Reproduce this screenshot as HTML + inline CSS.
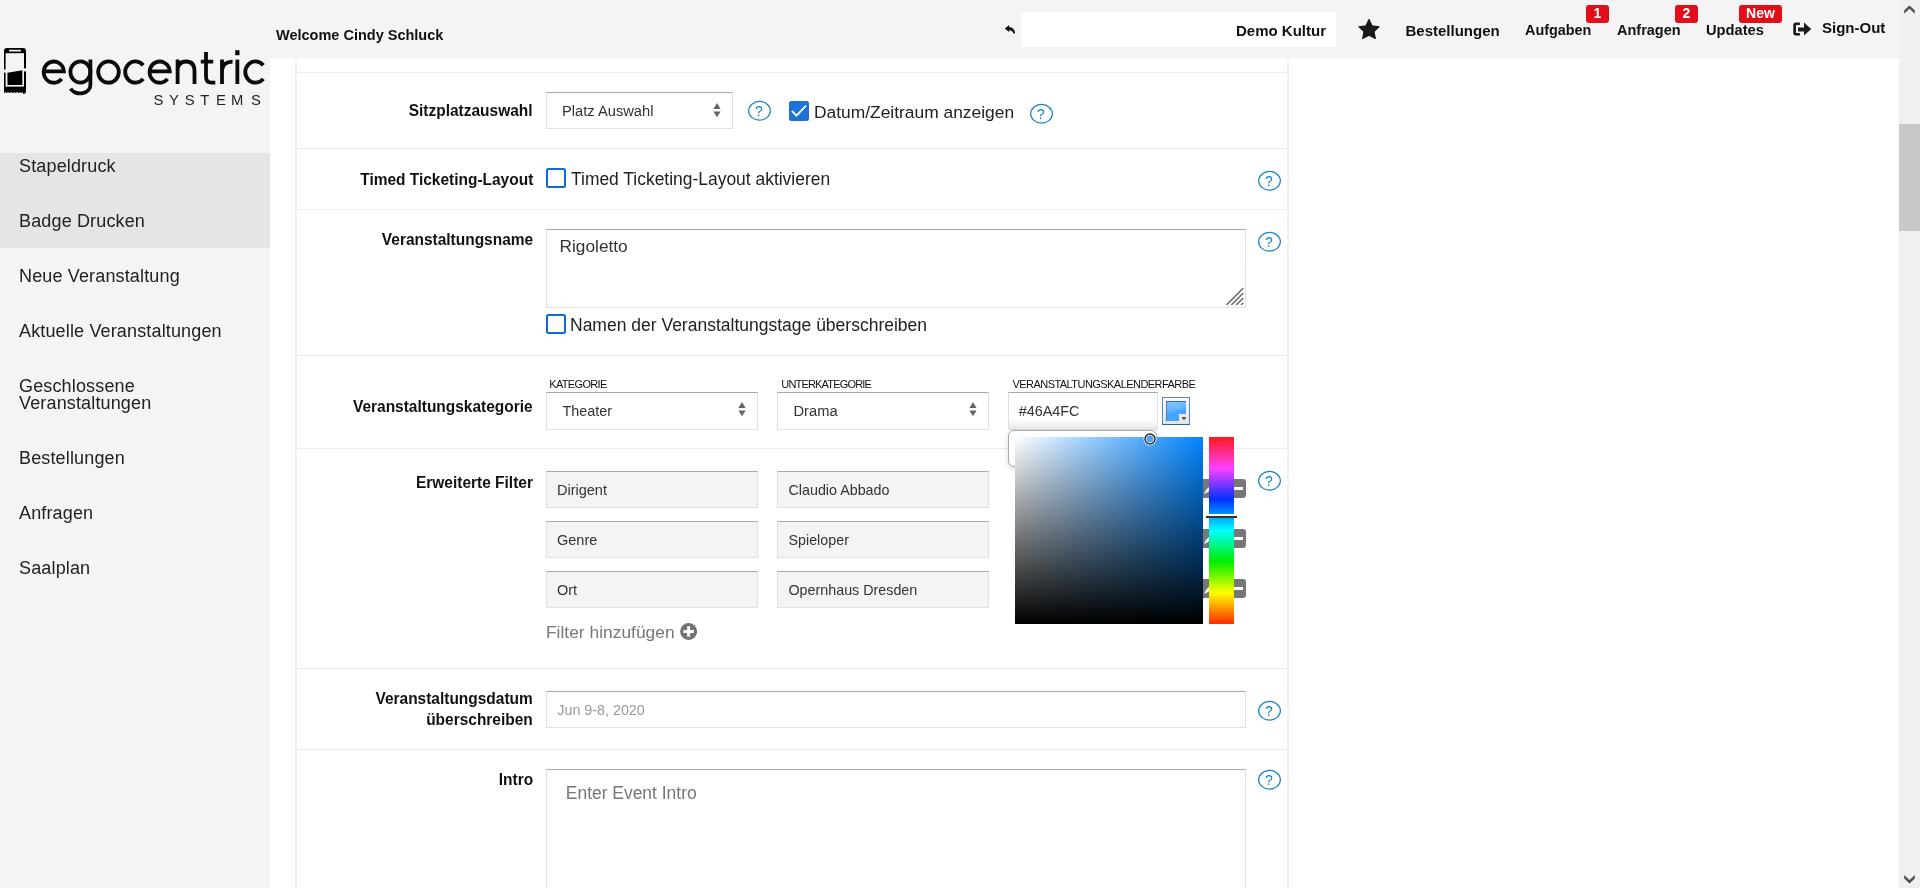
<!DOCTYPE html>
<html><head><meta charset="utf-8">
<style>
*{box-sizing:border-box;margin:0;padding:0}
html,body{width:1920px;height:888px;overflow:hidden;background:#f4f4f4;font-family:"Liberation Sans",sans-serif;color:#222}
.a{position:absolute}
#side{left:0;top:0;width:270px;height:888px;background:#f4f4f4}
.nav{position:absolute;left:19px;font-size:18px;color:#222;line-height:18px;white-space:nowrap;letter-spacing:0.15px}
#hl{left:0;top:153px;width:270px;height:95px;background:#e5e5e5}
#content{left:270px;top:58px;width:1629px;height:830px;background:#fff}
#panel{left:295px;top:58px;width:994px;height:830px;border-left:2px solid #f2f2f2;border-right:2px solid #f2f2f2}
.hr{position:absolute;left:297px;width:990px;height:1px;background:#ececec}
.lbl{position:absolute;right:1387px;font-size:17.2px;font-weight:700;color:#111;white-space:nowrap;text-align:right;line-height:21px;transform:scaleX(0.9);transform-origin:100% 50%}
.help{position:absolute}
.hdr{position:absolute;font-size:15px;font-weight:700;color:#111;white-space:nowrap;line-height:15px}
.badge{position:absolute;background:#e20f1b;color:#fff;font-weight:700;font-size:14px;border-radius:3px;text-align:center;line-height:16.6px;height:18px}
.box{position:absolute;border:1px solid #e0e0e0;border-top-color:#a9a9a9;background:#fff}
.txt{position:absolute;white-space:nowrap}
.cb{position:absolute;width:20px;height:20px;border:2px solid #0b6bd8;border-radius:2.5px;background:#fff}
.small{position:absolute;font-size:11px;color:#111;white-space:nowrap;line-height:11px}
</style></head>
<body>
<div id="wrap" class="a" style="left:0;top:0;width:1920px;height:888px;overflow:hidden;will-change:transform">
<div id="side" class="a"></div>
<div id="hl" class="a"></div>
<div id="content" class="a"></div>
<div id="panel" class="a"></div>
<!-- logo -->
<svg class="a" style="left:3px;top:47px" width="25" height="48" viewBox="0 0 25 48">
 <path d="M3.5 1.5h16a3 3 0 0 1 3 3v40.5h-22v-40.5a3 3 0 0 1 3-3z" fill="none" stroke="#000" stroke-width="0"/>
 <rect x="1" y="1" width="22" height="46" rx="3" fill="#000"/>
 <rect x="2.6" y="6.2" width="18.4" height="33.4" fill="#f4f4f4"/>
 <rect x="6" y="2.8" width="12" height="1.8" rx="0.9" fill="#f4f4f4"/>
 <path d="M4.4 25.8 L19.3 23.3 L19.4 38 L4.5 38 Z" fill="#000"/>
 <path d="M0 22.6 L3 22.4 L3 25.5 L0 25.7Z M21 21.4 L25 21 L25 24 L21 24.4Z" fill="#f4f4f4"/>
 <path d="M2 44.8 q1.5 2.6 3 0 q1.5 2.6 3 0 q1.5 2.6 3 0 q1.5 2.6 3 0 q1.5 2.6 3 0 q1.5 2.6 3 0 v3.5 h-18z" fill="#f4f4f4"/>
</svg>
<svg class="a" style="left:0;top:0" width="270" height="112" viewBox="0 0 270 112">
<g fill="none" stroke="#0a0a0a" stroke-width="3.8">
<path d="M43.8 71.3 H63.9 A10.1 10.6 0 1 0 61.6 78.9"/>
<path d="M80.4 61.4 A10 10.6 0 1 0 80.4 82.6 A10 10.6 0 1 0 80.4 61.4Z"/>
<path d="M90.4 59.6 V84.5 A10.4 8.4 0 0 1 70.6 88.6"/>
<path d="M108.5 61.4 A10.3 10.65 0 1 0 108.5 82.7 A10.3 10.65 0 1 0 108.5 61.4Z"/>
<path d="M143.2 65.2 A10.2 10.65 0 1 0 143.2 78.9"/>
<path d="M149.7 71.3 H169.8 A10.1 10.6 0 1 0 167.5 78.9"/>
<path d="M177.6 59.6 V84 M177.6 71 C177.6 64.5 181 61.5 186 61.5 C191.3 61.5 194.5 64.5 194.5 71 V84"/>
<path d="M206 51.9 V76.5 Q206 82.7 211.5 82.7 H215.3 M200.8 61.6 H213.2"/>
<path d="M222 59.6 V84 M222 70 Q223 61.6 232.6 61.6"/>
<path d="M237.35 59.6 V84"/>
<path d="M263.3 65.2 A10.2 10.65 0 1 0 263.3 78.9"/>
</g>
<rect x="235.2" y="50.2" width="4.3" height="5" fill="#0a0a0a"/>
<g font-family="Liberation Sans" font-size="14.8" fill="#222">
<text x="153.6" y="104.6">S</text><text x="168.9" y="104.6">Y</text><text x="184.7" y="104.6">S</text><text x="200.2" y="104.6">T</text><text x="215.9" y="104.6">E</text><text x="231.1" y="104.6">M</text><text x="250.9" y="104.6">S</text>
</g>
</svg>

<!-- sidebar nav -->
<div class="nav" style="top:156.5px">Stapeldruck</div>
<div class="nav" style="top:211.5px">Badge Drucken</div>
<div class="nav" style="top:267.2px">Neue Veranstaltung</div>
<div class="nav" style="top:322.2px">Aktuelle Veranstaltungen</div>
<div class="nav" style="top:378.2px;line-height:17px">Geschlossene<br>Veranstaltungen</div>
<div class="nav" style="top:448.5px">Bestellungen</div>
<div class="nav" style="top:503.5px">Anfragen</div>
<div class="nav" style="top:558.5px">Saalplan</div>

<!-- header -->
<div class="hdr" style="left:276px;top:27.7px;font-size:14.5px;line-height:14.5px;color:#111">Welcome Cindy Schluck</div>
<svg class="a" style="left:1003px;top:23px" width="14" height="13" viewBox="0 0 14 13"><path d="M1.8 5.5 L6.2 1.9 V3.9 C9.6 4.0 11.6 6.2 12.1 10 Q11.6 10.9 10.4 10.4 C9.8 8.6 8.6 7.4 6.2 7.3 V9.1 Z" fill="#111"/></svg>
<div class="a" style="left:1021px;top:12px;width:315px;height:35px;background:#fff"></div>
<div class="hdr" style="right:594px;top:23.3px">Demo Kultur</div>
<svg class="a" style="left:1358px;top:18.5px" width="22" height="21" viewBox="0 0 22 21"><path d="M11 0.6 L14.1 6.9 L21 7.8 L16 12.6 L17.3 19.5 L11 16.2 L4.7 19.5 L6 12.6 L1 7.8 L7.9 6.9Z" fill="#1a1a1a" stroke="#1a1a1a" stroke-width="1.2" stroke-linejoin="round"/></svg>
<div class="hdr" style="left:1405.5px;top:23px">Bestellungen</div>
<div class="hdr" style="left:1525px;top:23px;font-size:14.4px">Aufgaben</div>
<div class="badge" style="left:1586px;top:5px;width:23px">1</div>
<div class="hdr" style="left:1617px;top:23px;font-size:14.5px">Anfragen</div>
<div class="badge" style="left:1675px;top:5px;width:23px">2</div>
<div class="hdr" style="left:1706px;top:23px;font-size:14.7px">Updates</div>
<div class="badge" style="left:1739px;top:5px;width:43px">New</div>
<svg class="a" style="left:1793px;top:22px" width="19" height="15" viewBox="0 0 19 15"><path d="M6.9 0.4 H2.8 Q0.3 0.4 0.3 2.9 V11.1 Q0.3 13.6 2.8 13.6 H6.9 V11 H3 V3 H6.9Z" fill="#1a1a1a"/><path d="M5 5.4 H11 V0.4 L18.2 7 L11 13.6 V9.6 H5Z" fill="#1a1a1a"/></svg>
<div class="hdr" style="left:1822px;top:19.8px">Sign-Out</div>

<!-- scrollbar -->
<div class="a" style="left:1899px;top:0;width:21px;height:888px;background:#f1f1f1"></div>
<div class="a" style="left:1899px;top:124px;width:21px;height:107px;background:#c8c8c8"></div>
<svg class="a" style="left:1903px;top:4px" width="13" height="12" viewBox="0 0 13 12"><path d="M6.5 1.4 L11.8 6.3 V9.85 L6.5 4.8 L1.2 9.85 V6.3Z" fill="#505050"/></svg>
<svg class="a" style="left:1903px;top:873px" width="13" height="12" viewBox="0 0 13 12"><path d="M1.2 1.9 L6.5 6.95 L11.8 1.9 V5.45 L6.5 10.4 L1.2 5.45Z" fill="#505050"/></svg>
<!-- separators -->
<div class="hr" style="top:72px"></div>
<div class="hr" style="top:148px"></div>
<div class="hr" style="top:209px"></div>
<div class="hr" style="top:355px"></div>
<div class="hr" style="top:448px"></div>
<div class="hr" style="top:668px"></div>
<div class="hr" style="top:749px"></div>

<!-- labels -->
<div class="lbl" style="top:99.9px">Sitzplatzauswahl</div>
<div class="lbl" style="top:169.1px">Timed Ticketing-Layout</div>
<div class="lbl" style="top:228.8px">Veranstaltungsname</div>
<div class="lbl" style="top:395.9px">Veranstaltungskategorie</div>
<div class="lbl" style="top:472.1px">Erweiterte Filter</div>
<div class="lbl" style="top:687.8px">Veranstaltungsdatum<br>überschreiben</div>
<div class="lbl" style="top:768.8px">Intro</div>

<!-- row1 -->
<div class="box" style="left:546px;top:92px;width:187px;height:37px"></div>
<div class="txt" style="left:562px;top:104px;font-size:14.7px;line-height:14.7px;color:#333">Platz Auswahl</div>
<svg class="a" style="left:713px;top:102.9px" width="9" height="16" viewBox="0 0 9 16"><path d="M4 0 L7.6 5.9 H0.4Z M0.4 8.6 H7.6 L4 14.2Z" fill="#666"/></svg>
<svg class="help" style="left:747px;top:100px" width="25" height="22" viewBox="0 0 25 22"><ellipse cx="12.5" cy="10.8" rx="10.85" ry="9.35" fill="none" stroke="#1580cc" stroke-width="1.2"/><text x="12.0" y="15.8" text-anchor="middle" font-family="Liberation Sans" font-size="14" fill="#1580cc">?</text></svg>
<div class="cb" style="left:789px;top:101px;background:#1a74d9;border-color:#1a72d8"><svg width="16" height="16" viewBox="0 0 16 16" style="position:absolute;left:0;top:0"><path d="M0.9 7.9 L5.5 12.6 L15 2.6" fill="none" stroke="#fff" stroke-width="1.8"/></svg></div>
<div class="txt" style="left:814px;top:104.3px;font-size:17.4px;line-height:17.4px;color:#222">Datum/Zeitraum anzeigen</div>
<svg class="help" style="left:1029px;top:103px" width="25" height="22" viewBox="0 0 25 22"><ellipse cx="12.5" cy="10.8" rx="10.85" ry="9.35" fill="none" stroke="#1580cc" stroke-width="1.2"/><text x="12.0" y="15.8" text-anchor="middle" font-family="Liberation Sans" font-size="14" fill="#1580cc">?</text></svg>

<!-- row2 -->
<div class="cb" style="left:546px;top:168px"></div>
<div class="txt" style="left:571px;top:171.3px;font-size:17.45px;line-height:17.45px;color:#222">Timed Ticketing-Layout aktivieren</div>
<svg class="help" style="left:1257px;top:170px" width="25" height="22" viewBox="0 0 25 22"><ellipse cx="12.5" cy="10.8" rx="10.85" ry="9.35" fill="none" stroke="#1580cc" stroke-width="1.2"/><text x="12.0" y="15.8" text-anchor="middle" font-family="Liberation Sans" font-size="14" fill="#1580cc">?</text></svg>

<!-- row3 -->
<div class="box" style="left:546px;top:229px;width:700px;height:79px"></div>
<div class="txt" style="left:559.5px;top:238.4px;font-size:17.3px;line-height:17.3px;color:#333">Rigoletto</div>
<svg class="a" style="left:1226px;top:288px" width="18" height="18" viewBox="0 0 18 18"><path d="M0.9 16.5 L16.9 0.5 M5.8 16.5 L16.9 5.5 M10.7 16.5 L16.9 10.5 M15.5 16.5 L16.9 15.3" stroke="#6a6a6a" stroke-width="1.5" stroke-linecap="round"/></svg>
<svg class="help" style="left:1257px;top:231px" width="25" height="22" viewBox="0 0 25 22"><ellipse cx="12.5" cy="10.8" rx="10.85" ry="9.35" fill="none" stroke="#1580cc" stroke-width="1.2"/><text x="12.0" y="15.8" text-anchor="middle" font-family="Liberation Sans" font-size="14" fill="#1580cc">?</text></svg>
<div class="cb" style="left:546px;top:314px"></div>
<div class="txt" style="left:570px;top:316.8px;font-size:17.5px;line-height:17.5px;color:#222">Namen der Veranstaltungstage überschreiben</div>

<!-- row4 -->
<div class="small" style="left:549.3px;top:378.7px;letter-spacing:-0.67px">KATEGORIE</div>
<div class="small" style="left:781.3px;top:378.7px;letter-spacing:-0.82px">UNTERKATEGORIE</div>
<div class="small" style="left:1012.5px;top:379.2px;letter-spacing:-0.55px">VERANSTALTUNGSKALENDERFARBE</div>
<div class="box" style="left:546px;top:392px;width:212px;height:38px"></div>
<div class="txt" style="left:562.4px;top:404.3px;font-size:14.4px;line-height:14.4px;color:#333">Theater</div>
<svg class="a" style="left:737.5px;top:402.4px" width="9" height="16" viewBox="0 0 9 16"><path d="M4 0 L7.6 5.9 H0.4Z M0.4 8.6 H7.6 L4 14.2Z" fill="#666"/></svg>
<div class="box" style="left:777px;top:392px;width:212px;height:38px"></div>
<div class="txt" style="left:793.5px;top:404px;font-size:14.7px;line-height:14.7px;color:#333">Drama</div>
<svg class="a" style="left:969px;top:402.4px" width="9" height="16" viewBox="0 0 9 16"><path d="M4 0 L7.6 5.9 H0.4Z M0.4 8.6 H7.6 L4 14.2Z" fill="#666"/></svg>
<div class="box" style="left:1008px;top:392px;width:150px;height:38px;background:linear-gradient(to bottom,#fff 72%,#e9e9e9)"></div>
<div class="txt" style="left:1018.7px;top:403.5px;font-size:14.4px;line-height:14.4px;color:#333">#46A4FC</div>
<div class="a" style="left:1162px;top:397px;width:28px;height:28px;border:1px solid #4f86c8;border-bottom-color:#2d609f;background:linear-gradient(#fff,#e2e2e2)"></div><div class="a" style="left:1166px;top:401px;width:20px;height:20px;border-top:1px solid #2c6db3;border-left:1px solid #3a7cc0;background:linear-gradient(165deg,#86c6ff 0%,#6ab7ff 35%,#46a4fc 55%,#46a4fc 100%)"></div><div class="a" style="left:1179px;top:414px;width:8px;height:8px;background:#e9e9e9"></div><svg class="a" style="left:1181px;top:416px" width="6" height="5" viewBox="0 0 6 5"><path d="M0.6 1 H5.4 L3 4.4Z" fill="#555"/></svg>

<!-- row5 filters -->
<div class="box" style="left:546px;top:471px;width:212px;height:37px;background:#f4f4f4"></div>
<div class="box" style="left:777px;top:471px;width:212px;height:37px;background:#f4f4f4"></div>
<div class="box" style="left:546px;top:521px;width:212px;height:37px;background:#f4f4f4"></div>
<div class="box" style="left:777px;top:521px;width:212px;height:37px;background:#f4f4f4"></div>
<div class="box" style="left:546px;top:571px;width:212px;height:37px;background:#f4f4f4"></div>
<div class="box" style="left:777px;top:571px;width:212px;height:37px;background:#f4f4f4"></div>
<div class="txt" style="left:557px;top:482.7px;font-size:14.5px;line-height:14.5px;color:#333">Dirigent</div>
<div class="txt" style="left:788.5px;top:482.7px;font-size:14.3px;line-height:14.3px;color:#333">Claudio Abbado</div>
<div class="txt" style="left:557px;top:532.7px;font-size:14.5px;line-height:14.5px;color:#333">Genre</div>
<div class="txt" style="left:788.5px;top:532.7px;font-size:14.3px;line-height:14.3px;color:#333">Spieloper</div>
<div class="txt" style="left:557px;top:582.7px;font-size:14.5px;line-height:14.5px;color:#333">Ort</div>
<div class="txt" style="left:788.5px;top:582.7px;font-size:14.3px;line-height:14.3px;color:#333">Opernhaus Dresden</div>
<div class="txt" style="left:546px;top:623.7px;font-size:17.4px;line-height:17.4px;color:#777">Filter hinzufügen</div>
<svg class="a" style="left:680px;top:623px" width="17" height="17" viewBox="0 0 17 17"><circle cx="8.6" cy="8.55" r="8.45" fill="#737373"/><path d="M8.6 3.3 V13.8 M3.35 8.55 H13.85" stroke="#fff" stroke-width="2.9"/></svg>
<!-- hidden action buttons -->
<div class="a" style="left:1199px;top:479px;width:47px;height:19px;background:#777;border-radius:3px"></div><svg class="a" style="left:1199px;top:479px" width="47" height="19" viewBox="0 0 47 19"><path d="M5 15 L7 11 L14 4 L16 6 L9 13Z" fill="#fff"/><rect x="35" y="8" width="9" height="3" fill="#fff"/></svg>
<div class="a" style="left:1199px;top:529px;width:47px;height:19px;background:#777;border-radius:3px"></div><svg class="a" style="left:1199px;top:529px" width="47" height="19" viewBox="0 0 47 19"><path d="M5 15 L7 11 L14 4 L16 6 L9 13Z" fill="#fff"/><rect x="35" y="8" width="9" height="3" fill="#fff"/></svg>
<div class="a" style="left:1199px;top:579px;width:47px;height:19px;background:#777;border-radius:3px"></div><svg class="a" style="left:1199px;top:579px" width="47" height="19" viewBox="0 0 47 19"><path d="M5 15 L7 11 L14 4 L16 6 L9 13Z" fill="#fff"/><rect x="35" y="8" width="9" height="3" fill="#fff"/></svg>
<svg class="help" style="left:1257px;top:470px" width="25" height="22" viewBox="0 0 25 22"><ellipse cx="12.5" cy="10.8" rx="10.85" ry="9.35" fill="none" stroke="#1580cc" stroke-width="1.2"/><text x="12.0" y="15.8" text-anchor="middle" font-family="Liberation Sans" font-size="14" fill="#1580cc">?</text></svg>

<!-- row6 -->
<div class="box" style="left:546px;top:691px;width:700px;height:37px"></div>
<div class="txt" style="left:557.3px;top:703.2px;font-size:14.3px;line-height:14.3px;color:#999">Jun 9-8, 2020</div>
<svg class="help" style="left:1257px;top:700px" width="25" height="22" viewBox="0 0 25 22"><ellipse cx="12.5" cy="10.8" rx="10.85" ry="9.35" fill="none" stroke="#1580cc" stroke-width="1.2"/><text x="12.0" y="15.8" text-anchor="middle" font-family="Liberation Sans" font-size="14" fill="#1580cc">?</text></svg>

<!-- row7 -->
<div class="box" style="left:546px;top:769px;width:700px;height:140px"></div>
<div class="txt" style="left:565.8px;top:784.8px;font-size:17.45px;line-height:17.45px;color:#777">Enter Event Intro</div>
<svg class="help" style="left:1257px;top:769px" width="25" height="22" viewBox="0 0 25 22"><ellipse cx="12.5" cy="10.8" rx="10.85" ry="9.35" fill="none" stroke="#1580cc" stroke-width="1.2"/><text x="12.0" y="15.8" text-anchor="middle" font-family="Liberation Sans" font-size="14" fill="#1580cc">?</text></svg>

<!-- color picker -->
<div class="a" style="left:1008px;top:430px;width:149px;height:37px;border:1px solid #aaa;border-radius:6px;background:#fff;box-shadow:0 2px 6px rgba(0,0,0,.15)"></div>
<div class="a" style="left:1015px;top:437px;width:188px;height:187px;background:linear-gradient(to bottom,rgba(0,0,0,0),#000),linear-gradient(to right,#fff,#0084ff)"></div>
<svg class="a" style="left:1142.7px;top:431.8px" width="14" height="14" viewBox="0 0 14 14"><circle cx="7" cy="7" r="5" fill="#46a4fc" stroke="#fff" stroke-width="3"/><circle cx="7" cy="7" r="5" fill="none" stroke="#222" stroke-width="1.4"/></svg>
<div class="a" style="left:1209px;top:437px;width:25px;height:187px;background:linear-gradient(to bottom,#ff1a1a 0%,#ff40ff 16.67%,#0030ff 33.33%,#00ffff 50%,#00ee00 66.67%,#ffff00 83.33%,#ff2a00 100%)"></div>
<div class="a" style="left:1209px;top:514px;width:25px;height:4px;background:#fff"></div><div class="a" style="left:1206px;top:515.5px;width:31px;height:2px;background:#333"></div>

</div>
</body></html>
